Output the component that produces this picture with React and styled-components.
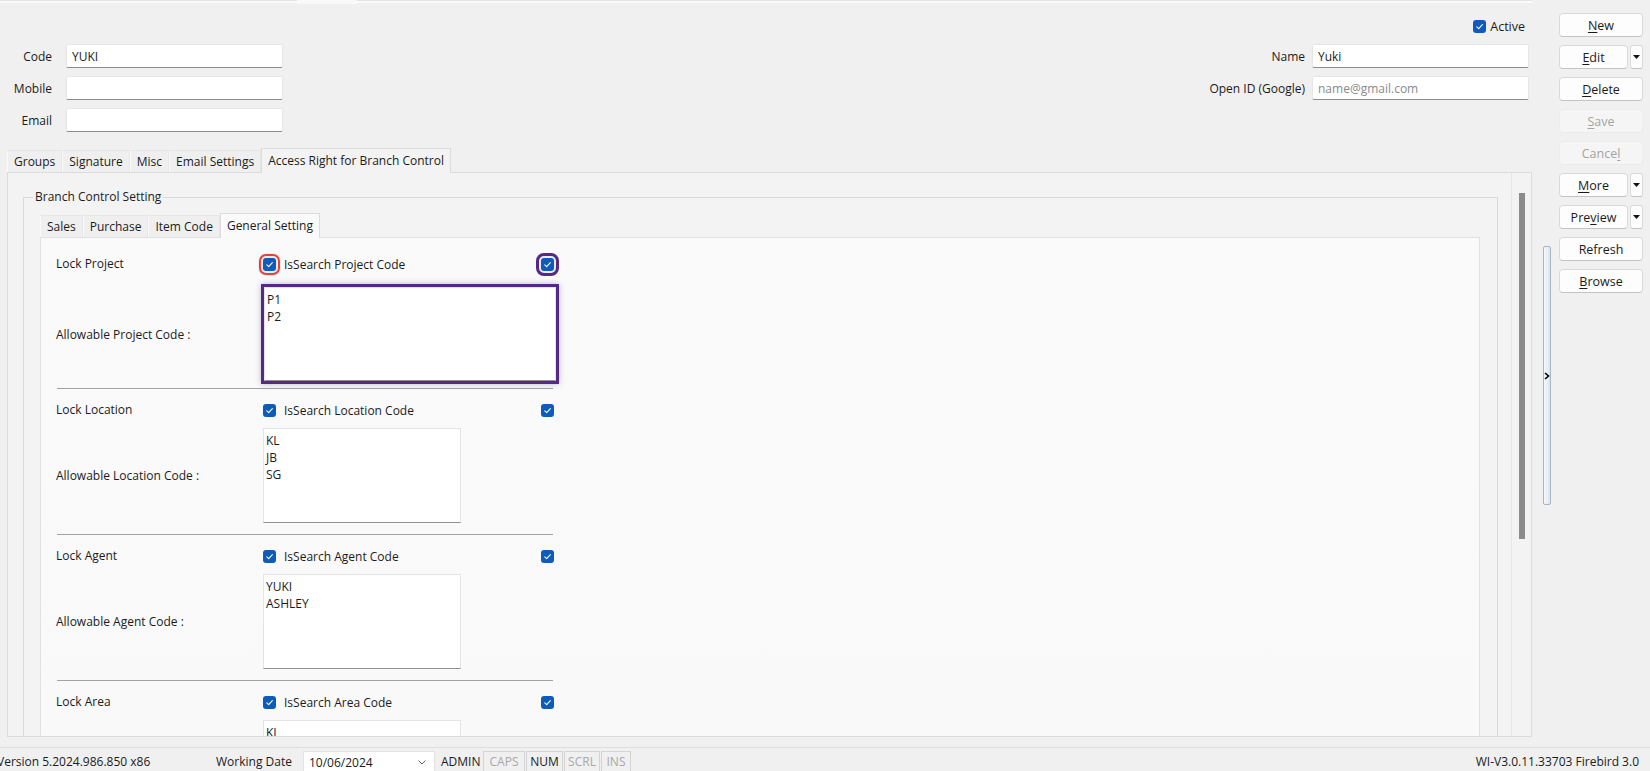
import React from 'react';
import styled, { createGlobalStyle } from 'styled-components';

const GlobalStyle = createGlobalStyle`
  html, body {
    margin: 0;
    padding: 0;
    background: #f0f0f0;
    overflow: hidden;
  }
  body {
    font-family: "Open Sans", "Noto Sans", sans-serif;
    font-size: 12px;
    color: #1b1b1b;
  }
  * { box-sizing: border-box; }
`;

const Shell = styled.div`
  width: 1650px;
  height: 771px;
  display: grid;
  grid-template-rows: 1fr 24px;
  background: #f0f0f0;
  overflow: hidden;
`;

const Main = styled.div`
  display: flex;
  min-height: 0;
`;

const FormArea = styled.div`
  width: 1532px;
  display: flex;
  flex-direction: column;
  min-height: 0;
`;

const TopStrip = styled.div`
  height: 4px;
  flex-shrink: 0;
  background: linear-gradient(#e4e4e4 0 1px, #fbfbfb 1px 3px, #f0f0f0 3px);
`;

const TopStub = styled.div`
  margin-left: 297px;
  width: 60px;
  height: 4px;
  background: #f9f9f9;
`;

const Header = styled.div`
  height: 144px;
  flex-shrink: 0;
  display: flex;
  justify-content: space-between;
  padding-right: 3px;
`;

const FieldGrid = styled.div`
  display: grid;
  grid-template-columns: ${p => p.$cols};
  column-gap: ${p => p.$gap}px;
  row-gap: 8px;
  grid-auto-rows: 24px;
  align-items: center;
  align-content: start;
  padding-top: ${p => p.$top}px;
`;

const FieldLabel = styled.label`
  text-align: right;
  white-space: nowrap;
`;

const TextInput = styled.input`
  height: 24px;
  width: 100%;
  background: #fff;
  border: 1px solid #e6e6e6;
  border-bottom: 1px solid #8c8c8c;
  border-radius: 2px;
  padding: 0 5px;
  font-family: inherit;
  font-size: 12px;
  color: #1b1b1b;
  outline: none;

  &::placeholder {
    color: #8a8a8a;
  }
`;

const ActiveRow = styled.label`
  grid-column: 2;
  justify-self: end;
  display: flex;
  align-items: center;
  gap: 4px;
  margin: 4px 4px 0 0;
  font-size: 12.5px;
`;

const BoxCheck = styled.span`
  width: 13px;
  height: 13px;
  flex-shrink: 0;
  border-radius: 3px;
  background: #0d5cbd;
  display: grid;
  place-items: center;
  outline: ${p => p.$ring === 'red' ? '2.5px solid #e2433d' : p.$ring === 'purple' ? '3px solid #552a86' : 'none'};
  outline-offset: 2px;
  box-shadow: ${p => p.$ring ? '0 0 0 5px rgba(0,0,0,0.06)' : 'none'};
`;

const Check = ({ ring }) => (
  <BoxCheck $ring={ring}>
    <svg width="9" height="9" viewBox="0 0 10 10">
      <path d="M2 5.3 L4.1 7.3 L8.2 2.9" fill="none" stroke="#fff" strokeWidth="1.2" strokeLinecap="round" strokeLinejoin="round" />
    </svg>
  </BoxCheck>
);

const TabStrip = styled.div`
  display: flex;
  align-items: flex-end;
  height: 24px;
  flex-shrink: 0;
  margin-left: ${p => p.$indent || 0}px;
  margin-top: ${p => p.$top || 0}px;
`;

const Tab = styled.div`
  position: relative;
  z-index: ${p => p.$active ? 1 : 0};
  height: ${p => p.$active ? 25 : 22}px;
  margin-bottom: ${p => p.$active ? -1 : 0}px;
  display: flex;
  align-items: center;
  padding: ${p => p.$active ? '0 6px 2px' : '0 6px'};
  background: ${p => p.$active ? p.$bg : '#efefef'};
  border: 1px solid ${p => p.$active ? '#dcdcdc' : '#e6e6e6'};
  border-bottom: none;
  border-left-color: ${p => p.$active ? '#dcdcdc' : '#fafafa'};
  white-space: nowrap;
`;

const OuterPanel = styled.div`
  flex: 1;
  min-height: 0;
  display: flex;
  margin: 0 0 10px 7px;
  background: #f3f3f3;
  border: 1px solid #dcdcdc;
  overflow: hidden;
`;

const ScrollArea = styled.div`
  flex: 1;
  min-width: 0;
  overflow: hidden;
  padding: 24px 13px 0 15px;
`;

const ScrollColumn = styled.div`
  width: 20px;
  flex-shrink: 0;
  border-left: 1px solid #e6e6e6;
  padding: 20px 0 0 7px;
`;

const ScrollThumb = styled.div`
  width: 6px;
  height: 346px;
  background: #8b8b8b;
`;

const GroupBox = styled.div`
  border: 1px solid #dadada;
  border-bottom: none;
  padding: 0 17px 0 16px;
`;

const GroupTitle = styled.div`
  width: fit-content;
  margin: -9px 0 0 -7px;
  padding: 0 2px;
  line-height: 16px;
  background: #f3f3f3;
`;

const InnerPanel = styled.div`
  background: linear-gradient(#fafafa, #f9f9f9);
  border: 1px solid #e2e2e2;
  padding: 5px 0 0 15px;
  height: 520px;
  overflow: hidden;
`;

const Section = styled.div`
  display: grid;
  grid-template-columns: 206px 292px;
  grid-template-rows: 28px ${p => p.$boxH}px;
  row-gap: ${p => p.$rowGap}px;
  padding: 7px 0 ${p => p.$bottom}px;
  align-items: center;
`;

const RowLabel = styled.div`
  white-space: nowrap;
  margin-top: ${p => p.$lift ? -2 : 0}px;
`;

const CheckRow = styled.div`
  display: flex;
  align-items: center;
  padding: 0 0 0 1px;
`;

const CheckText = styled.span`
  margin-left: 8px;
  flex: 1;
`;

const ListBox = styled.div`
  grid-column: 2;
  align-self: stretch;
  width: ${p => p.$wide ? '292px' : '198px'};
  background: #fff;
  border: 1px solid #e4e4e4;
  border-bottom: 1px solid #8f8f8f;
  padding: 3px 2px;
  line-height: 17px;
  white-space: pre-line;
  outline: ${p => p.$highlight ? '3px solid #552a86' : 'none'};
  outline-offset: 0;
  box-shadow: ${p => p.$highlight ? '0 0 6px 3px rgba(40,20,70,0.28)' : 'none'};
  margin-left: ${p => p.$highlight ? 2 : 1}px;
`;

const Divider = styled.div`
  width: 496px;
  margin-left: 1px;
  border-top: 1px solid #a3a3a3;
`;

const SideArea = styled.div`
  display: flex;
  flex: 1;
`;

const SplitterColumn = styled.div`
  width: 27px;
  flex-shrink: 0;
  padding: 246px 0 0 11px;
`;

const SplitHandle = styled.div`
  width: 8px;
  height: 259px;
  border: 1px solid #a7b6c5;
  border-radius: 2px;
  background: linear-gradient(90deg, #f6f9fc, #dbe5ee);
  display: flex;
  align-items: center;
`;

const ButtonColumn = styled.div`
  width: 84px;
  display: flex;
  flex-direction: column;
  align-items: stretch;
  gap: 8px;
  padding-top: 13px;
`;

const SplitRow = styled.div`
  display: flex;
  gap: 2px;
  height: 24px;
`;

const ActionButton = styled.button`
  height: 24px;
  flex: ${p => p.$grow ? '1 1 auto' : '0 0 24px'};
  min-width: 0;
  font-family: inherit;
  font-size: 12.5px;
  color: ${p => p.disabled ? '#a3a3a3' : '#1b1b1b'};
  background: ${p => p.disabled ? '#f5f5f5' : '#fdfdfd'};
  border: 1px solid ${p => p.disabled ? '#ececec' : '#d9d9d9'};
  border-bottom-color: ${p => p.disabled ? '#ececec' : '#c4c4c4'};
  border-radius: 4px;
  padding: 0;
  cursor: default;

  u {
    text-underline-offset: 2px;
  }
`;

const ArrowButton = styled.button`
  width: 13px;
  height: 24px;
  flex-shrink: 0;
  padding: 0;
  background: #fdfdfd;
  border: 1px solid #d9d9d9;
  border-bottom-color: #c4c4c4;
  border-radius: 3px;
  display: grid;
  place-items: center;
`;

const StatusBar = styled.div`
  display: flex;
  align-items: stretch;
  padding-top: 3px;
  border-top: 1px solid #dedede;
  overflow: hidden;
  white-space: nowrap;
`;

const StatusText = styled.div`
  display: flex;
  align-items: center;
  width: ${p => p.$w ? `${p.$w}px` : 'auto'};
  margin-left: ${p => p.$ml || 0}px;
  padding-right: ${p => p.$pr || 0}px;
  flex-shrink: 0;
`;

const DateBox = styled.div`
  width: 132px;
  background: #fff;
  border: 1px solid #e3e3e3;
  border-bottom: none;
  display: flex;
  align-items: center;
  justify-content: space-between;
  padding: 2px 8px 0 5px;
  flex-shrink: 0;
`;

const Indicator = styled.div`
  width: ${p => p.$w}px;
  margin-left: ${p => p.$ml}px;
  border: 1px solid #d4d4d4;
  border-bottom: none;
  display: flex;
  align-items: center;
  justify-content: center;
  color: ${p => p.$on ? '#1b1b1b' : '#a8a8a8'};
  flex-shrink: 0;
`;

const StatusSpacer = styled.div`
  flex: 1;
`;

const Caret = () => (
  <svg width="7" height="4" viewBox="0 0 7 4">
    <path d="M0 0 H7 L3.5 4 Z" fill="#111" />
  </svg>
);

const sections = [
  { lock: 'Lock Project', search: 'IsSearch Project Code', allow: 'Allowable Project Code :', items: 'P1\nP2', wide: true, highlight: true },
  { lock: 'Lock Location', search: 'IsSearch Location Code', allow: 'Allowable Location Code :', items: 'KL\nJB\nSG' },
  { lock: 'Lock Agent', search: 'IsSearch Agent Code', allow: 'Allowable Agent Code :', items: 'YUKI\nASHLEY' },
  { lock: 'Lock Area', search: 'IsSearch Area Code', items: 'KL' },
];

const buttons = [
  { label: <><u>N</u>ew</> },
  { label: <><u>E</u>dit</>, split: true },
  { label: <><u>D</u>elete</> },
  { label: <><u>S</u>ave</>, disabled: true },
  { label: <>Cance<u>l</u></>, disabled: true },
  { label: <><u>M</u>ore</>, split: true },
  { label: <>Pre<u>v</u>iew</>, split: true },
  { label: <>Refresh</> },
  { label: <><u>B</u>rowse</> },
];

const topTabs = ['Groups', 'Signature', 'Misc', 'Email Settings', 'Access Right for Branch Control'];
const innerTabs = ['Sales', 'Purchase', 'Item Code', 'General Setting'];

export default function App() {
  return (
    <>
      <GlobalStyle />
      <Shell>
        <Main>
          <FormArea>
            <TopStrip>
              <TopStub />
            </TopStrip>
            <Header>
              <FieldGrid $cols="52px 217px" $gap={14} $top={40}>
                <FieldLabel>Code</FieldLabel>
                <TextInput readOnly value="YUKI" />
                <FieldLabel>Mobile</FieldLabel>
                <TextInput readOnly value="" />
                <FieldLabel>Email</FieldLabel>
                <TextInput readOnly value="" />
              </FieldGrid>
              <FieldGrid $cols="auto 217px" $gap={7} $top={8}>
                <ActiveRow>
                  <Check />
                  Active
                </ActiveRow>
                <FieldLabel>Name</FieldLabel>
                <TextInput readOnly value="Yuki" />
                <FieldLabel>Open ID (Google)</FieldLabel>
                <TextInput readOnly value="" placeholder="name@gmail.com" />
              </FieldGrid>
            </Header>

            <TabStrip $indent={7}>
              {topTabs.map((t, i) => (
                <Tab key={t} $active={i === topTabs.length - 1} $bg="#f3f3f3">{t}</Tab>
              ))}
            </TabStrip>

            <OuterPanel>
              <ScrollArea>
                <GroupBox>
                  <GroupTitle>Branch Control Setting</GroupTitle>
                  <TabStrip $top={8}>
                    {innerTabs.map((t, i) => (
                      <Tab key={t} $active={i === innerTabs.length - 1} $bg="#fafafa">{t}</Tab>
                    ))}
                  </TabStrip>
                  <InnerPanel>
                    {sections.map((s, i) => (
                      <React.Fragment key={s.lock}>
                        <Section
                          $boxH={s.highlight ? 94 : 95}
                          $rowGap={s.highlight ? 9 : 4}
                          $bottom={s.highlight ? 7 : 11}
                        >
                          <RowLabel $lift>{s.lock}</RowLabel>
                          <CheckRow>
                            <Check ring={s.highlight ? 'red' : undefined} />
                            <CheckText>{s.search}</CheckText>
                            <Check ring={s.highlight ? 'purple' : undefined} />
                          </CheckRow>
                          {s.allow && <RowLabel>{s.allow}</RowLabel>}
                          <ListBox $wide={s.wide} $highlight={s.highlight}>{s.items}</ListBox>
                        </Section>
                        {i < sections.length - 1 && <Divider />}
                      </React.Fragment>
                    ))}
                  </InnerPanel>
                </GroupBox>
              </ScrollArea>
              <ScrollColumn>
                <ScrollThumb />
              </ScrollColumn>
            </OuterPanel>
          </FormArea>

          <SideArea>
            <SplitterColumn>
              <SplitHandle>
                <svg width="6" height="8" viewBox="0 0 6 8">
                  <path d="M1 1 L4.5 4 L1 7" fill="none" stroke="#000" strokeWidth="1.6" />
                </svg>
              </SplitHandle>
            </SplitterColumn>
            <ButtonColumn>
              {buttons.map((b, i) => (
                b.split ? (
                  <SplitRow key={i}>
                    <ActionButton $grow>{b.label}</ActionButton>
                    <ArrowButton><Caret /></ArrowButton>
                  </SplitRow>
                ) : (
                  <ActionButton key={i} disabled={b.disabled}>{b.label}</ActionButton>
                )
              ))}
            </ButtonColumn>
          </SideArea>
        </Main>

        <StatusBar>
          <StatusText $w={219} $ml={-3}>Version 5.2024.986.850 x86</StatusText>
          <StatusText $w={87}>Working Date</StatusText>
          <DateBox>
            <span>10/06/2024</span>
            <svg width="8" height="5" viewBox="0 0 8 5">
              <path d="M0.5 0.5 L4 4 L7.5 0.5" fill="none" stroke="#666" strokeWidth="1" />
            </svg>
          </DateBox>
          <StatusText $w={42} $ml={6}>ADMIN</StatusText>
          <Indicator $w={42} $ml={0}>CAPS</Indicator>
          <Indicator $w={37} $ml={1} $on>NUM</Indicator>
          <Indicator $w={36} $ml={1}>SCRL</Indicator>
          <Indicator $w={30} $ml={1}>INS</Indicator>
          <StatusSpacer />
          <StatusText $pr={11}>WI-V3.0.11.33703 Firebird 3.0</StatusText>
        </StatusBar>
      </Shell>
    </>
  );
}
